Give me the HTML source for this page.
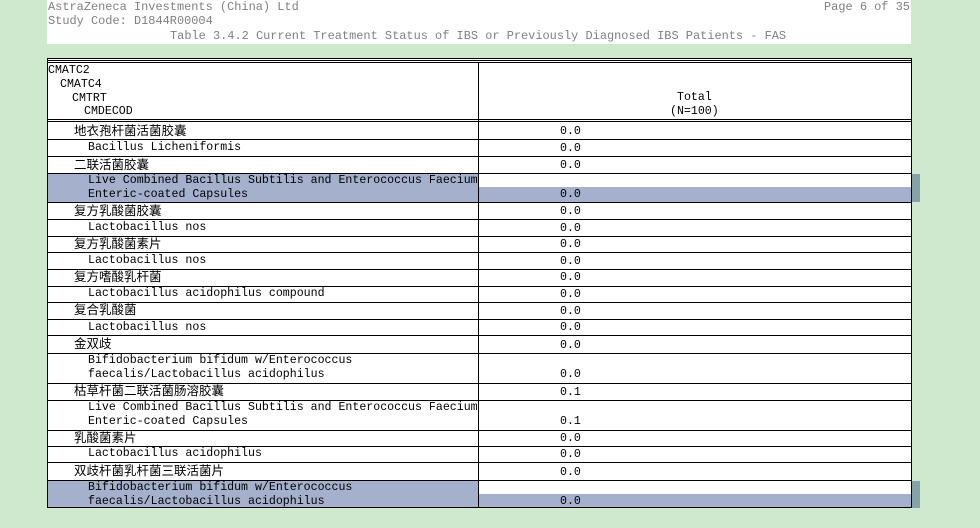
<!DOCTYPE html>
<html><head><meta charset="utf-8"><style>
body{margin:0;width:980px;height:528px;background:#cfe9cf;position:relative;overflow:hidden;font-family:"Liberation Mono","Noto Sans CJK SC",monospace;font-size:11.95px;color:#000}
.a{position:absolute;white-space:pre;line-height:14px}
#t .a{font-size:11.6px;margin-top:1px}
#t .c{font-family:"WenQuanYi Zen Hei","Noto Sans CJK SC",sans-serif;font-size:12.5px}
.h{position:absolute;left:47px;width:864px;height:1px;background:#000}
.g{color:#808080}
.hl{position:absolute;background:#a4b0cc}
</style></head><body>
<div style="position:absolute;left:47px;top:0;width:864px;height:44px;background:#fff"></div>
<div class="a g" style="left:48px;top:0px">AstraZeneca Investments (China) Ltd</div>
<div class="a g" style="left:824px;top:0px">Page 6 of 35</div>
<div class="a g" style="left:48px;top:14px">Study Code: D1844R00004</div>
<div class="a g" style="left:170px;top:29px">Table 3.4.2 Current Treatment Status of IBS or Previously Diagnosed IBS Patients - FAS</div>

<div style="position:absolute;left:47px;top:58px;width:864px;height:450px;background:#fff"></div>
<div class="hl" style="left:47px;top:173px;width:431px;height:29px"></div>
<div class="hl" style="left:478px;top:187px;width:433px;height:15px"></div>
<div style="position:absolute;left:911px;top:174px;width:9px;height:28px;background:#86a2a6"></div>
<div class="hl" style="left:47px;top:480px;width:431px;height:28px"></div>
<div class="hl" style="left:478px;top:494px;width:433px;height:14px"></div>
<div style="position:absolute;left:911px;top:481px;width:9px;height:27px;background:#86a2a6"></div>

<div class="h" style="top:58px"></div><div class="h" style="top:60px"></div><div class="h" style="top:62px"></div>
<div class="h" style="top:119px"></div><div class="h" style="top:121px"></div>
<div style="position:absolute;left:47px;top:58px;width:1px;height:450px;background:#000"></div>
<div style="position:absolute;left:478px;top:62px;width:1px;height:446px;background:#000"></div>
<div style="position:absolute;left:911px;top:58px;width:1px;height:450px;background:#000"></div>
<div class="h" style="top:507px"></div>

<div class="h" style="top:139px"></div><div class="h" style="top:156px"></div><div class="h" style="top:173px"></div><div class="h" style="top:202px"></div><div class="h" style="top:219px"></div><div class="h" style="top:236px"></div><div class="h" style="top:252px"></div><div class="h" style="top:269px"></div><div class="h" style="top:286px"></div><div class="h" style="top:302px"></div><div class="h" style="top:319px"></div><div class="h" style="top:335px"></div><div class="h" style="top:353px"></div><div class="h" style="top:383px"></div><div class="h" style="top:400px"></div><div class="h" style="top:430px"></div><div class="h" style="top:446px"></div><div class="h" style="top:462px"></div><div class="h" style="top:480px"></div>

<div id="t">
<div class="a" style="left:48px;top:63px">CMATC2</div>
<div class="a" style="left:60px;top:77px">CMATC4</div>
<div class="a" style="left:72px;top:91px">CMTRT</div>
<div class="a" style="left:84px;top:104px">CMDECOD</div>
<div class="a" style="left:677px;top:90px">Total</div>
<div class="a" style="left:670px;top:104px">(N=100)</div>

<div class="a c" style="left:74px;top:122px">地衣孢杆菌活菌胶囊</div><div class="a" style="left:560px;top:124px">0.0</div>
<div class="a" style="left:88px;top:140px">Bacillus Licheniformis</div><div class="a" style="left:560px;top:141px">0.0</div>
<div class="a c" style="left:74px;top:156px">二联活菌胶囊</div><div class="a" style="left:560px;top:158px">0.0</div>
<div class="a" style="left:88px;top:173px">Live Combined Bacillus Subtilis and Enterococcus Faecium
Enteric-coated Capsules</div><div class="a" style="left:560px;top:187px">0.0</div>
<div class="a c" style="left:74px;top:202px">复方乳酸菌胶囊</div><div class="a" style="left:560px;top:204px">0.0</div>
<div class="a" style="left:88px;top:220px">Lactobacillus nos</div><div class="a" style="left:560px;top:221px">0.0</div>
<div class="a c" style="left:74px;top:235px">复方乳酸菌素片</div><div class="a" style="left:560px;top:237px">0.0</div>
<div class="a" style="left:88px;top:253px">Lactobacillus nos</div><div class="a" style="left:560px;top:254px">0.0</div>
<div class="a c" style="left:74px;top:268px">复方嗜酸乳杆菌</div><div class="a" style="left:560px;top:270px">0.0</div>
<div class="a" style="left:88px;top:286px">Lactobacillus acidophilus compound</div><div class="a" style="left:560px;top:287px">0.0</div>
<div class="a c" style="left:74px;top:301px">复合乳酸菌</div><div class="a" style="left:560px;top:304px">0.0</div>
<div class="a" style="left:88px;top:320px">Lactobacillus nos</div><div class="a" style="left:560px;top:320px">0.0</div>
<div class="a c" style="left:74px;top:335px">金双歧</div><div class="a" style="left:560px;top:338px">0.0</div>
<div class="a" style="left:88px;top:353px">Bifidobacterium bifidum w/Enterococcus
faecalis/Lactobacillus acidophilus</div><div class="a" style="left:560px;top:367px">0.0</div>
<div class="a c" style="left:74px;top:382px">枯草杆菌二联活菌肠溶胶囊</div><div class="a" style="left:560px;top:385px">0.1</div>
<div class="a" style="left:88px;top:400px">Live Combined Bacillus Subtilis and Enterococcus Faecium
Enteric-coated Capsules</div><div class="a" style="left:560px;top:414px">0.1</div>
<div class="a c" style="left:74px;top:429px">乳酸菌素片</div><div class="a" style="left:560px;top:431px">0.0</div>
<div class="a" style="left:88px;top:446px">Lactobacillus acidophilus</div><div class="a" style="left:560px;top:447px">0.0</div>
<div class="a c" style="left:74px;top:462px">双歧杆菌乳杆菌三联活菌片</div><div class="a" style="left:560px;top:465px">0.0</div>
<div class="a" style="left:88px;top:480px">Bifidobacterium bifidum w/Enterococcus
faecalis/Lactobacillus acidophilus</div><div class="a" style="left:560px;top:494px">0.0</div>
</div>
</body></html>
